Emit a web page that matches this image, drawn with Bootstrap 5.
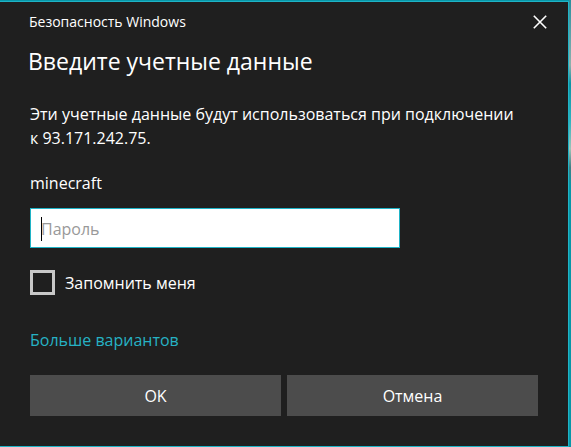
<!DOCTYPE html>
<html lang="ru">
<head>
<meta charset="utf-8">
<meta name="viewport" content="width=device-width, initial-scale=1">
<title>Безопасность Windows</title>
<link href="https://cdn.jsdelivr.net/npm/bootstrap@5.3.0/dist/css/bootstrap.min.css" rel="stylesheet">
<style>
  body {
    background: #0797a8;
    font-family: "Segoe UI", "Open Sans", "Noto Sans", sans-serif;
    font-size: 16px;
    line-height: 24px;
  }
  .desktop {
    padding: 1px 2px 0 0;
    background:
      linear-gradient(#2b8f9d, #5fa5ab 20%, #8fb0ac 35%, #0b94a5 45%, #2fb3c0 65%, #9cc4b8 80%, #3f8085 90%, #0797a8) right top / 2px 186px no-repeat,
      #0797a8;
  }
  .cred-dialog {
    background: #1f1f1f;
    color: #fff;
    border: 1px solid #1fb3c6;
    border-left: 0;
  }
  .title-bar { padding-left: 29px; height: 40px; font-size: 14px; }
  .btn-x { width: 56px; color: #fff; }
  .cred-body { padding: 0 30px 29px; }
  .cred-title { font-size: 23px; line-height: 32px; margin: 3px 0 25px -2px; }
  .user-name { margin: 21px 0 13px; }
  .pass-field, .pass-field:focus {
    max-width: 370px;
    height: 40px;
    padding: 2px 10px 0;
    border: 1px solid #1fb3c6;
    color: #000;
    font-size: inherit;
    box-shadow: none;
    background: linear-gradient(#000, #000) 10px 8px / 1px 24px no-repeat #fff;
  }
  .pass-field::placeholder { color: #999; opacity: 1; }
  .remember { gap: 10px; margin: 22px 0 33px; }
  .remember .form-check-input {
    width: 25px;
    height: 25px;
    border: 3px solid #c8c8c8;
    background-color: #1f1f1f;
  }
  .more-link { color: #26b2c4; }
  .actions { gap: 6px; margin-top: 23px; }
  .btn-cred, .btn-cred:hover { height: 41px; padding: 0; background: #4c4c4c; color: #fff; font-size: inherit; line-height: 24px; border: 0; }
</style>
</head>
<body>
<div class="desktop min-vh-100 d-flex flex-column">
  <main class="cred-dialog flex-grow-1 d-flex flex-column" role="dialog" aria-labelledby="cred-title">
    <header class="title-bar d-flex align-items-center justify-content-between">
      <span>Безопасность Windows</span>
      <button type="button" class="btn-x btn rounded-0 border-0 p-0 h-100 d-flex align-items-center justify-content-center" aria-label="Закрыть">
        <svg width="14" height="14" viewBox="0 0 14 14" fill="none" stroke="currentColor" stroke-width="1.6" aria-hidden="true"><path d="M.8.8l12.4 12.4M13.2.8L.8 13.2"/></svg>
      </button>
    </header>
    <form class="cred-body flex-grow-1 d-flex flex-column">
      <h1 id="cred-title" class="cred-title fw-normal">Введите учетные данные</h1>
      <p class="m-0">Эти учетные данные будут использоваться при подключении к&nbsp;93.171.242.75.</p>
      <p class="user-name">minecraft</p>
      <input type="password" class="pass-field form-control rounded-0" placeholder="Пароль" aria-label="Пароль">
      <div class="remember d-flex align-items-center">
        <input type="checkbox" class="form-check-input rounded-0 m-0" id="remember">
        <label for="remember">Запомнить меня</label>
      </div>
      <div><a href="#" class="more-link text-decoration-none">Больше вариантов</a></div>
      <div class="actions d-flex">
        <button type="submit" class="btn-cred btn rounded-0 w-50">OK</button>
        <button type="button" class="btn-cred btn rounded-0 w-50">Отмена</button>
      </div>
    </form>
  </main>
</div>
<script src="https://cdn.jsdelivr.net/npm/bootstrap@5.3.0/dist/js/bootstrap.bundle.min.js"></script>
</body>
</html>
